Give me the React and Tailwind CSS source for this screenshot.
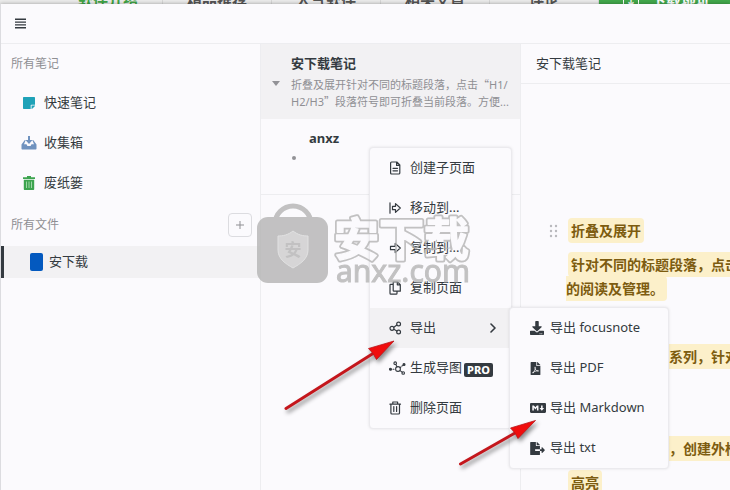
import { FaDownload, FaFileExport, FaFilePdf, FaMarkdown, FaStickyNote } from 'react-icons/fa'
import clsx from 'clsx'

const SITE_TABS = [
  { label: '软件介绍', active: true },
  { label: '精品推荐' },
  { label: '人气软件' },
  { label: '相关文章' },
  { label: '评论' },
]

const stroke = { fill: 'none', stroke: 'currentColor', strokeLinecap: 'round', strokeLinejoin: 'round' }

function MenuIcon() {
  return (
    <svg viewBox="0 0 11 11" className="h-[11px] w-[11px]" stroke="currentColor" strokeWidth="1.4">
      <path d="M0 1.300h11M0 4.100h11M0 6.900h11M0 9.700h11" />
    </svg>
  )
}

function InboxIcon() {
  return (
    <svg viewBox="0 0 16 14" className="h-[14px] w-4 text-[#6f92bf]" fill="currentColor">
      <path d="M7 0h2v4h2.500L8 8 4.500 4H7z" />
      <path d="M3.800 4 .5 8.600V12.500c0 .6.400 1 1 1h13c.6 0 1-.4 1-1V8.600L12.200 4h-.9l1.700 4.300h-2.500L9.600 10H6.400l-.9-1.700H3L4.700 4z" />
      <path d="M2.600 9h2.500l1 1.900h3.800l1-1.900h2.500v2H2.600z" />
    </svg>
  )
}

function BinIcon() {
  return (
    <svg viewBox="0 0 12 14" className="h-[14px] w-3 text-[#3da44f]">
      <path fill="currentColor" d="M4 0h4v1.200h4V3H0V1.200h4zM.8 3.800h10.400V13c0 .6-.4 1-1 1H1.800c-.6 0-1-.4-1-1z" />
      <path stroke="#a9dcb1" strokeWidth="0.9" d="M3.500 5.500v6.500M6 5.500v6.500M8.500 5.500v6.500" />
    </svg>
  )
}

function PageIcon() {
  return (
    <svg viewBox="0 0 14 14" className="h-[14px] w-[14px]" {...stroke} strokeWidth="1.2">
      <path d="M2.600 1h5.200l3 3v8c0 .6-.4 1-1 1H2.600c-.5 0-1-.4-1-1V2c0-.6.500-1 1-1zM7.600 1.200v3.200h3M4 7.300h4.500M4 9.800h4.500" />
    </svg>
  )
}

function MoveIcon() {
  return (
    <svg viewBox="0 0 14 14" className="h-[14px] w-[14px]" {...stroke} strokeWidth="1.2">
      <path d="M1 1.800v10.400M3.500 5.300h3V2.600L11.300 7l-4.800 4.400V8.700h-3z" />
    </svg>
  )
}

function CopyToIcon() {
  return (
    <svg viewBox="0 0 14 14" className="h-[14px] w-[14px]" {...stroke} strokeWidth="1.2">
      <path d="M1.500 5.300h4.700V2.400L11.300 7l-5.100 4.600V8.700H1.500z" />
    </svg>
  )
}

function CopyIcon() {
  return (
    <svg viewBox="0 0 14 14" className="h-[14px] w-[14px]" {...stroke} strokeWidth="1.2">
      <path d="M5 .8h3.500l2.800 2.800v6.600H5c-.5 0-.8-.3-.8-.8V1.600c0-.5.3-.8.800-.8zM8.300 1v2.800h2.800M4 3.300H1.800c-.5 0-.8.3-.8.800v8.200c0 .5.3.9.800.9h5.400c.4 0 .8-.4.800-.9v-1.900" />
    </svg>
  )
}

function ShareIcon() {
  return (
    <svg viewBox="0 0 14 14" className="h-[14px] w-[14px]" {...stroke} strokeWidth="1.2">
      <circle cx="3" cy="7.300" r="2" />
      <circle cx="9.600" cy="3" r="1.900" />
      <circle cx="9.600" cy="11" r="1.900" />
      <path d="M4.800 6.300 7.900 4.100M4.800 8.300l3.100 1.800" />
    </svg>
  )
}

function MindMapIcon() {
  return (
    <svg viewBox="0 0 18 14" className="h-[14px] w-[18px]" {...stroke} strokeWidth="1.100">
      <circle cx="9" cy="8" r="2.400" />
      <circle cx="6.200" cy="2.200" r="1.300" />
      <circle cx="14.200" cy="12" r="1.300" />
      <circle cx="1.500" cy="8.200" r="1" fill="currentColor" />
      <circle cx="15" cy="3.500" r="1" fill="currentColor" />
      <path d="M4 8.200h1M6.800 3.500l1.200 2.200M11.200 6.600l.8-.7M13 5l.5-.4M11 9.600l2.200 1.500" />
    </svg>
  )
}

function TrashIcon() {
  return (
    <svg viewBox="0 0 14 14" className="h-[14px] w-[14px]" {...stroke} strokeWidth="1.2">
      <path d="M.9 3.200h10.600M3.800 3V1h4.800v2M1.900 3.400V12c0 .6.400 1 1 1h6.600c.6 0 1-.4 1-1V3.400M4.800 5.600v4.800M7.600 5.600v4.800" />
    </svg>
  )
}

const NOTE_LINKS = [
  { label: '快速笔记', icon: <FaStickyNote className="h-[14px] w-3 text-[#1fa2b8]" /> },
  { label: '收集箱', icon: <InboxIcon /> },
  { label: '废纸篓', icon: <BinIcon /> },
]

const EXPORTS = [
  { label: '导出 focusnote', icon: <FaDownload className="h-[14px] w-[14px]" /> },
  { label: '导出 PDF', icon: <FaFilePdf className="h-[13px] w-[11px]" /> },
  { label: '导出 Markdown', icon: <FaMarkdown className="h-4 w-4" /> },
  { label: '导出 txt', icon: <FaFileExport className="h-[13px] w-[15px]" /> },
]

const MENU = [
  { label: '创建子页面', icon: <PageIcon /> },
  { label: '移动到...', icon: <MoveIcon /> },
  { label: '复制到...', icon: <CopyToIcon /> },
  { label: '复制页面', icon: <CopyIcon /> },
  { label: '导出', icon: <ShareIcon />, children: EXPORTS },
  { label: '生成导图', icon: <MindMapIcon />, pro: true },
  { label: '删除页面', icon: <TrashIcon /> },
]

function SiteStrip() {
  return (
    <div className="flex h-1 overflow-hidden bg-[#ececec] text-[15px] font-bold text-[#555]">
      <div className="w-[54px] shrink-0" />
      {SITE_TABS.map(tab => (
        <div
          key={tab.label}
          className={clsx('-mt-[10px] h-5 w-[109px] shrink-0 border-r border-[#d8d8d8] text-center leading-5', tab.active && 'text-[#3fa545]')}
        >
          {tab.label}
        </div>
      ))}
      <div className="-mt-[10px] ml-auto flex h-5 w-[131px] shrink-0 items-center gap-3 bg-[#43a94c] pl-6 leading-5 text-white">
        <span className="h-4 w-4 border border-white text-center text-xs leading-4">↓</span>
        下载地址
      </div>
    </div>
  )
}

function Sidebar() {
  return (
    <nav className="w-[260px] shrink-0 border-r border-[#ededf0]">
      <h2 className="flex h-[39px] items-center pl-[10px] text-xs text-[#8f8f93]">所有笔记</h2>
      {NOTE_LINKS.map(link => (
        <a key={link.label} href="#" className="flex h-10 items-center gap-[7px] pl-5">
          <span className="flex w-4 justify-center">{link.icon}</span>
          {link.label}
        </a>
      ))}
      <div className="flex h-[43px] items-center justify-between pl-[10px] pr-2">
        <h2 className="text-xs text-[#8f8f93]">所有文件</h2>
        <button aria-label="新建文件" className="flex h-6 w-6 items-center justify-center rounded border border-[#dcdce0] text-[#8f8f93]">
          <svg viewBox="0 0 8 8" className="h-2 w-2" stroke="currentColor"><path d="M4 0v8M0 4h8" /></svg>
        </button>
      </div>
      <a href="#" className="flex h-8 items-center gap-[6px] border-l-[3px] border-[#343a40] bg-[#f2f1f3] pl-[26px]">
        <span className="h-[18px] w-[13px] rounded-xs bg-[#0359bf]" />
        安下载
      </a>
    </nav>
  )
}

function Submenu({ items }) {
  return (
    <ul className="absolute -top-px left-[139px] z-10 w-[160px] rounded border border-[#ebeaee] bg-[#fbfafd] shadow-[0_0_3px_rgba(0,0,0,0.1)]">
      {items.map(item => (
        <li key={item.label}>
          <button className="flex h-10 w-full items-center gap-1 pl-5">
            <span className="flex w-4 justify-start">{item.icon}</span>
            {item.label}
          </button>
        </li>
      ))}
    </ul>
  )
}

function ContextMenu() {
  return (
    <ul className="absolute left-[108px] top-[103px] z-20 w-[143px] rounded border border-[#ebeaee] bg-[#fbfafd] shadow-[0_0_3px_rgba(0,0,0,0.1)]">
      {MENU.map(item => (
        <li key={item.label} className="relative">
          <button className={clsx('flex h-10 w-full items-center whitespace-nowrap pl-[19px] pr-3', item.children && 'bg-[#f2f1f3]')}>
            <span className="w-[21px] shrink-0">{item.icon}</span>
            {item.label}
            {item.pro && (
              <span className="ml-[2px] mt-1 rounded-xs bg-[#343a40] px-[3px] text-[11px] font-extrabold leading-[14px] text-white">PRO</span>
            )}
            {item.children && (
              <svg viewBox="0 0 8 10" className="ml-auto mr-[2px] h-[10px] w-2" {...stroke} strokeWidth="1.6"><path d="M2 1l4 4-4 4" /></svg>
            )}
          </button>
          {item.children && <Submenu items={item.children} />}
        </li>
      ))}
    </ul>
  )
}

function Quote({ children }) {
  return <span className="font-['Noto_Sans_CJK_SC',sans-serif]">{children}</span>
}

function PageList() {
  return (
    <section className="relative w-[260px] shrink-0 border-r border-[#ededf0]">
      <article className="flex h-[75px] bg-[#f2f1f3]">
        <svg viewBox="0 0 8 5" className="ml-[11px] mt-[37px] h-[5px] w-2 shrink-0" fill="#929296"><path d="M0 0h8L4 5z" /></svg>
        <div className="ml-[11px] w-[222px] pt-[9px]">
          <h3 className="text-[13px] font-bold leading-5">安下载笔记</h3>
          <p className="mt-[3px] whitespace-nowrap text-[11px] leading-4 text-[#8f8f93]">
            折叠及展开针对不同的标题段落，点击<Quote>“</Quote>H1/<br />
            H2/H3<Quote>”</Quote>段落符号即可折叠当前段落。方便...
          </p>
        </div>
      </article>
      <article className="h-[76px] border-b border-[#ededf0] pl-[31px] pt-[9px]">
        <h3 className="pl-[17px] text-[13px] font-bold leading-5">anxz</h3>
        <div className="mt-2 h-1 w-1 rounded-full bg-[#929296]" />
      </article>
      <ContextMenu />
    </section>
  )
}

function Block({ children }) {
  return (
    <p className="mb-[10px] leading-6">
      <mark className="ml-[2px] rounded bg-[#fcf0ca] px-[3px] py-[3px] text-[#7d5c10]">{children}</mark>
    </p>
  )
}

function Editor() {
  return (
    <main className="min-w-0 flex-1 overflow-hidden">
      <h1 className="flex h-10 items-center border-b border-[#ededf0] pl-[15px]">安下载笔记</h1>
      <div className="flex pl-[28px] pt-[135px]">
        <svg viewBox="0 0 10 14" className="mt-[5px] h-[14px] w-[10px] shrink-0" fill="#b9b9bd">
          {[2, 7, 12].map(y => [2, 7].map(x => <circle key={x + '-' + y} cx={x} cy={y} r="1.200" />))}
        </svg>
        <div className="ml-[7px] whitespace-nowrap text-sm font-bold">
          <Block>折叠及展开</Block>
          <Block>针对不同的标题段落，点击段落<br />的阅读及管理。</Block>
          <div className="mt-11">
            <Block>支持高亮颜色及系列，针对</Block>
          </div>
          <div className="mt-[68px]">
            <Block>选中文字内容等，创建外框</Block>
            <Block>高亮</Block>
          </div>
        </div>
      </div>
    </main>
  )
}

function Watermark() {
  return (
    <div className="pointer-events-none absolute left-[257px] top-[203px] z-30 flex gap-1 opacity-80">
      <svg viewBox="0 0 71 80" className="h-20 w-[71px] shrink-0">
        <path d="M18 36V21a18 18 0 0 1 36 0v15" fill="none" stroke="#b4b4b4" strokeWidth="5" />
        <rect y="14" width="71" height="66" rx="11" fill="#b4b4b4" />
        <path d="M36 28c5 4 10 5 15 5v14c0 9-8 14-15 18-7-4-15-9-15-18V33c5 0 10-1 15-5z" fill="#cdcdcd" stroke="#dcdcdc" />
        <text x="36" y="53" textAnchor="middle" fontSize="17" fontWeight="700" fill="#b4b4b4">安</text>
      </svg>
      <div className="text-[#b4b4b4]">
        <svg viewBox="0 0 142 62" className="h-[62px] w-[142px]">
          <mask id="outline" maskUnits="userSpaceOnUse" x="0" y="0" width="142" height="62">
            <g fontSize="45" fontWeight="700" strokeLinejoin="round">
              <text x="2" y="53" fill="#fff" stroke="#fff" strokeWidth="5">安下载</text>
              <text x="2" y="53" fill="#000" stroke="#000" strokeWidth="1.5">安下载</text>
            </g>
          </mask>
          <rect width="142" height="62" fill="currentColor" mask="url(#outline)" />
        </svg>
        <div className="-mt-[9px] pl-1 text-[30px] leading-[30px] [-webkit-text-stroke:1px_#b4b4b4]">anxz.com</div>
      </div>
    </div>
  )
}

// Red pointers to the export entry and its Markdown option
function Arrows() {
  return (
    <svg viewBox="0 0 270 140" className="pointer-events-none absolute left-[280px] top-[335px] z-40 h-[140px] w-[270px] drop-shadow-[2px_3px_2px_rgba(0,0,0,0.45)]">
      <g stroke="#c4161c" strokeWidth="3" strokeLinecap="round">
        <path d="M6 73.500 93 18.500" />
        <path d="M180.500 129 235 98" />
      </g>
      <g fill="#f00d0d" stroke="#b8161b" strokeWidth="0.8">
        <path d="M114 6 88.500 13.500l4.500 5 3.500 6z" />
        <path d="M255.500 85.500 230.500 93l4.500 5 3 5.500z" />
      </g>
    </svg>
  )
}

export default function App() {
  return (
    <div className="relative flex h-screen flex-col overflow-hidden bg-[#fbfafd] font-['Noto_Sans','Noto_Sans_CJK_SC',sans-serif] text-[13px] text-[#343a40]">
      <SiteStrip />
      <div className="flex min-h-0 flex-1 flex-col border-l border-[#dcdce0] shadow-[0_0_4px_rgba(0,0,0,0.35)]">
        <header className="flex h-10 shrink-0 items-center border-b border-[#ededf0] pl-[14px]">
          <button aria-label="菜单"><MenuIcon /></button>
        </header>
        <div className="flex min-h-0 flex-1">
          <Sidebar />
          <PageList />
          <Editor />
        </div>
      </div>
      <Watermark />
      <Arrows />
    </div>
  )
}
